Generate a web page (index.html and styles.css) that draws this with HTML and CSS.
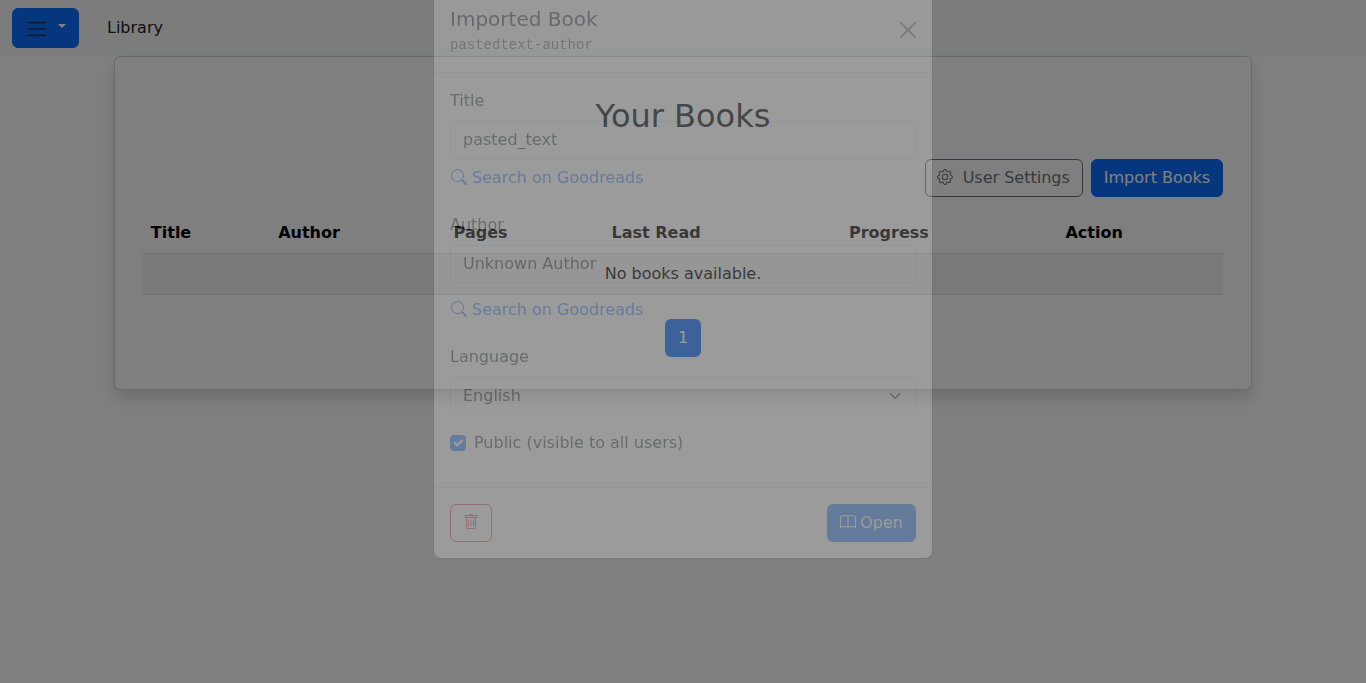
FILE: index.html
```html
<!DOCTYPE html>
<html lang="en">
<head>
<meta charset="utf-8">
<title>Library</title>
<link rel="stylesheet" href="styles.css">
</head>
<body>
<svg class="sprite" aria-hidden="true">
  <symbol id="search" viewBox="0 0 16 16"><path d="M11.742 10.344a6.5 6.5 0 1 0-1.397 1.398h-.001q.044.06.098.115l3.85 3.85a1 1 0 0 0 1.415-1.414l-3.85-3.85a1 1 0 0 0-.115-.1zM12 6.5a5.5 5.5 0 1 1-11 0 5.5 5.5 0 0 1 11 0"/></symbol>
</svg>
<nav class="navbar">
  <button class="btn btn-primary menu-btn" aria-label="Menu">
    <svg class="menu-icon" viewBox="0 0 30 30"><path d="M4 7h22M4 15h22M4 23h22"/></svg>
    <span class="caret"></span>
  </button>
  <span class="brand">Library</span>
</nav>
<main class="card">
  <h2 class="heading">Your Books</h2>
  <div class="actions">
    <button class="btn btn-outline">
      <svg class="icon" viewBox="0 0 16 16"><path d="M8 4.754a3.246 3.246 0 1 0 0 6.492 3.246 3.246 0 0 0 0-6.492M5.754 8a2.246 2.246 0 1 1 4.492 0 2.246 2.246 0 0 1-4.492 0"/><path d="M9.796 1.343c-.527-1.79-3.065-1.79-3.592 0l-.094.319a.873.873 0 0 1-1.255.52l-.292-.16c-1.64-.892-3.433.902-2.54 2.541l.159.292a.873.873 0 0 1-.52 1.255l-.319.094c-1.79.527-1.79 3.065 0 3.592l.319.094a.873.873 0 0 1 .52 1.255l-.16.292c-.892 1.64.901 3.434 2.541 2.54l.292-.159a.873.873 0 0 1 1.255.52l.094.319c.527 1.79 3.065 1.79 3.592 0l.094-.319a.873.873 0 0 1 1.255-.52l.292.16c1.64.893 3.434-.902 2.54-2.541l-.159-.292a.873.873 0 0 1 .52-1.255l.319-.094c1.79-.527 1.79-3.065 0-3.592l-.319-.094a.873.873 0 0 1-.52-1.255l.16-.292c.893-1.64-.902-3.433-2.541-2.54l-.292.159a.873.873 0 0 1-1.255-.52zm-2.633.283c.246-.835 1.428-.835 1.674 0l.094.319a1.873 1.873 0 0 0 2.693 1.115l.291-.16c.764-.415 1.6.42 1.184 1.185l-.159.292a1.873 1.873 0 0 0 1.116 2.692l.318.094c.835.246.835 1.428 0 1.674l-.319.094a1.873 1.873 0 0 0-1.115 2.693l.16.291c.415.764-.42 1.6-1.185 1.184l-.291-.159a1.873 1.873 0 0 0-2.693 1.116l-.094.318c-.246.835-1.428.835-1.674 0l-.094-.319a1.873 1.873 0 0 0-2.692-1.115l-.292.16c-.764.415-1.6-.42-1.184-1.185l.159-.291A1.873 1.873 0 0 0 1.945 8.93l-.319-.094c-.835-.246-.835-1.428 0-1.674l.319-.094A1.873 1.873 0 0 0 3.06 4.377l-.16-.292c-.415-.764.42-1.6 1.185-1.184l.292.159a1.873 1.873 0 0 0 2.692-1.115z"/></svg>
      User Settings
    </button>
    <button class="btn btn-primary">Import Books</button>
  </div>
  <table class="books">
    <thead><tr><th>Title</th><th>Author</th><th>Pages</th><th>Last Read</th><th>Progress</th><th>Action</th></tr></thead>
    <tbody><tr><td colspan="6">No books available.</td></tr></tbody>
  </table>
  <div class="pagination"><a class="page">1</a></div>
</main>
<div class="backdrop"></div>
<div class="modal">
  <section class="dialog">
    <header class="dialog-header">
      <div>
        <h5 class="dialog-title">Imported Book</h5>
        <div class="dialog-sub">pastedtext-author</div>
      </div>
      <svg class="close" viewBox="0 0 16 16"><path d="M.293.293a1 1 0 0 1 1.414 0L8 6.586 14.293.293a1 1 0 1 1 1.414 1.414L9.414 8l6.293 6.293a1 1 0 0 1-1.414 1.414L8 9.414l-6.293 6.293a1 1 0 0 1-1.414-1.414L6.586 8 .293 1.707a1 1 0 0 1 0-1.414"/></svg>
    </header>
    <div class="dialog-body">
      <div class="field">
        <div class="label">Title</div>
        <div class="control">pasted_text</div>
        <a class="lookup"><svg class="icon"><use href="#search"/></svg>Search on Goodreads</a>
      </div>
      <div class="field field-author">
        <div class="label">Author</div>
        <div class="control">Unknown Author</div>
        <a class="lookup"><svg class="icon"><use href="#search"/></svg>Search on Goodreads</a>
      </div>
      <div class="label">Language</div>
      <div class="control select">English
        <svg class="chevron" viewBox="0 0 16 16"><path d="m2 5 6 6 6-6"/></svg>
      </div>
      <div class="check-row">
        <span class="checkbox"><svg viewBox="0 0 20 20"><path d="m6 10 3 3 6-6"/></svg></span>
        Public (visible to all users)
      </div>
    </div>
    <footer class="dialog-footer">
      <button class="btn btn-danger" aria-label="Delete"><svg class="icon" viewBox="0 0 16 16"><path d="M5.5 5.5A.5.5 0 0 1 6 6v6a.5.5 0 0 1-1 0V6a.5.5 0 0 1 .5-.5m2.5 0a.5.5 0 0 1 .5.5v6a.5.5 0 0 1-1 0V6a.5.5 0 0 1 .5-.5m3 .5a.5.5 0 0 0-1 0v6a.5.5 0 0 0 1 0z"/><path d="M14.5 3a1 1 0 0 1-1 1H13v9a2 2 0 0 1-2 2H5a2 2 0 0 1-2-2V4h-.5a1 1 0 0 1-1-1V2a1 1 0 0 1 1-1H6a1 1 0 0 1 1-1h2a1 1 0 0 1 1 1h3.5a1 1 0 0 1 1 1zM4.118 4 4 4.059V13a1 1 0 0 0 1 1h6a1 1 0 0 0 1-1V4.059L11.882 4zM2.5 3h11V2h-11z"/></svg></button>
      <button class="btn btn-primary open-btn"><svg class="icon" viewBox="0 0 16 16"><path d="M1 2.828c.885-.37 2.154-.769 3.388-.893 1.33-.134 2.458.063 3.112.752v9.746c-.935-.53-2.12-.603-3.213-.493-1.18.12-2.37.461-3.287.811zm7.5-.141c.654-.689 1.782-.886 3.112-.752 1.234.124 2.503.523 3.388.893v9.923c-.918-.35-2.107-.692-3.287-.81-1.094-.111-2.278-.039-3.213.492zM8 1.783C7.015.936 5.587.81 4.287.94c-1.514.153-3.042.672-3.994 1.105A.5.5 0 0 0 0 2.5v11a.5.5 0 0 0 .707.455c.882-.4 2.303-.881 3.68-1.02 1.409-.142 2.59.087 3.223.877a.5.5 0 0 0 .78 0c.633-.79 1.814-1.019 3.222-.877 1.378.139 2.8.62 3.681 1.02A.5.5 0 0 0 16 13.5v-11a.5.5 0 0 0-.293-.455c-.952-.433-2.48-.952-3.994-1.105C10.413.809 8.985.936 8 1.783"/></svg>Open</button>
    </footer>
  </section>
</div>
</body>
</html>
```
FILE: styles.css
```css
* { box-sizing: border-box; }
body {
  margin: 0;
  height: 683px;
  overflow: hidden;
  background: #fff;
  color: #212529;
  font: 16px/24px "DejaVu Sans", sans-serif;
}
.sprite { display: none; }
.navbar {
  display: flex;
  align-items: flex-start;
  height: 56px;
  padding: 8px 12px;
  background: #f8f9fa;
}
.btn {
  display: flex;
  align-items: center;
  height: 38px;
  margin: 0;
  padding: 6px 12px;
  border: 1px solid transparent;
  border-radius: 6px;
  background: transparent;
  color: #212529;
  font: inherit;
  white-space: nowrap;
}
.btn-primary { background: #0d6efd; border-color: #0d6efd; color: #fff; }
.btn-outline { gap: 9px; border-color: #6c757d; color: #6c757d; }
.btn-danger { border-color: #dc3545; color: #dc3545; }
.icon { width: 16px; height: 16px; fill: currentColor; flex: none; margin-bottom: 2px; }
.menu-btn { height: 40px; gap: 8.6px; align-items: flex-start; padding-top: 8px; }
.menu-icon { width: 24px; height: 24px; flex: none; }
.menu-icon path {
  stroke: rgba(33, 37, 41, .75);
  stroke-width: 2;
  stroke-linecap: round;
}
.caret {
  margin-top: 7px;
  border-top: 4.8px solid #fff;
  border-left: 4.8px solid transparent;
  border-right: 4.8px solid transparent;
}
.btn-outline .icon { margin-left: -.5px; margin-right: .5px; }
.brand { margin-left: 28.4px; padding-top: 8px; color: #212529; }
.card {
  width: 83.3333%;
  height: 334px;
  margin: 0 auto;
  padding: 40px 28px 0;
  position: relative;
  border: 1px solid rgba(0, 0, 0, .175);
  border-radius: 6px;
  background: #fff;
  box-shadow: 0 8px 16px rgba(0, 0, 0, .15);
}
.heading {
  margin: 0 0 24px;
  font-size: 32px;
  font-weight: 500;
  line-height: 38px;
  text-align: center;
}
.actions { display: flex; justify-content: flex-end; gap: 8px; margin-bottom: 16px; }
.books { width: 100%; border-collapse: collapse; }
.books th, .books td { padding: 8px; border-bottom: 1px solid #dee2e6; color: #000; }
.books th { text-align: left; }
.books td { background: #f2f2f2; text-align: center; }
.pagination { display: flex; justify-content: center; margin-top: 24px; }
.page {
  width: 36px;
  padding: 7px 0;
  border-radius: 6px;
  background: #0d6efd;
  color: #fff;
  text-align: center;
}
.backdrop { position: fixed; inset: 0; background: rgba(0, 0, 0, .5); }
.modal { position: fixed; inset: 0; opacity: .22; }
.dialog {
  width: 500px;
  margin: -13px auto 0;
  border: 1px solid rgba(0, 0, 0, .175);
  border-radius: 8px;
  background: #fff;
  background-clip: padding-box;
}
.dialog-header {
  display: flex;
  align-items: center;
  justify-content: space-between;
  padding: 16px;
  border-bottom: 1px solid #dee2e6;
}
.dialog-title { margin: 0; font-size: 20px; font-weight: 500; line-height: 30px; }
.dialog-sub {
  margin-top: 1px;
  color: rgba(33, 37, 41, .75);
  font: 14px/21px "Liberation Mono", monospace;
}
.close { width: 16px; height: 16px; margin-bottom: 1px; opacity: .5; }
.dialog-body { padding: 16px; }
.field { display: flex; flex-direction: column; margin-bottom: 23px; }
.label { margin-bottom: 8px; }
.control {
  height: 38px;
  padding: 6px 12px;
  border: 1px solid #dee2e6;
  border-radius: 6px;
}
.select { display: flex; align-items: center; justify-content: space-between; }
.chevron { width: 16px; height: 12px; }
.chevron path {
  fill: none;
  stroke: #343a40;
  stroke-width: 2;
  stroke-linecap: round;
  stroke-linejoin: round;
}
.lookup {
  display: flex;
  align-items: center;
  gap: 5px;
  margin-top: 7px;
  padding-left: 1px;
  color: #0d6efd;
}
.field-author .lookup { margin-top: 15px; }
.check-row { display: flex; align-items: center; gap: 8px; margin: 16px 0; }
.checkbox {
  display: flex;
  width: 16px;
  height: 16px;
  border-radius: 4px;
  background: #0d6efd;
}
.checkbox path {
  fill: none;
  stroke: #fff;
  stroke-width: 3;
  stroke-linecap: round;
  stroke-linejoin: round;
}
.dialog-footer {
  display: flex;
  justify-content: space-between;
  padding: 16px;
  border-top: 1px solid #dee2e6;
}
.open-btn { gap: 4px; }
```
